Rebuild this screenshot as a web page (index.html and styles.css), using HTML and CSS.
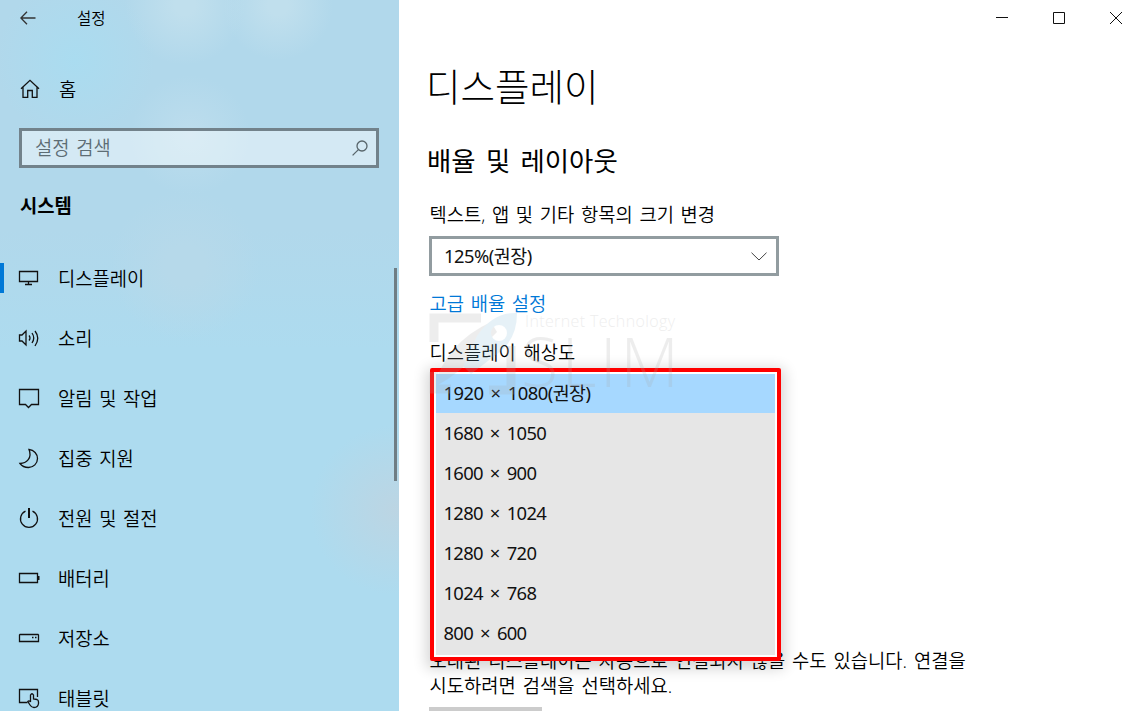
FILE: index.html
```html
<!DOCTYPE html>
<html lang="ko">
	<head>
		<meta charset="utf-8">
		<title>설정</title>
		<link rel="stylesheet" href="styles.css">
	</head>
	<body>
		<aside class="sidebar">
			<header class="titlebar">
				<svg class="back" width="16" height="14" viewBox="0 0 16 14"><path d="M15.500 7H1M7 .7L.9 7L7 13.300"/></svg>
				<span>설정</span>
			</header>

			<a class="home">
				<svg width="20" height="20" viewBox="0 0 20 20"><path d="M1 9.700L10 1.300L19 9.700M3 8.200V18.300H7.700V11.500H12.300V18.300H17V8.200"/></svg>
				<span>홈</span>
			</a>

			<div class="search">
				<span>설정 검색</span>
				<svg width="16" height="16" viewBox="0 0 16 16"><circle cx="10" cy="6" r="5"/><path d="M6.400 9.600L.6 15.400"/></svg>
			</div>

			<h3>시스템</h3>

			<nav>
				<a class="active">
					<svg width="22" height="22" viewBox="0 0 22 22"><path d="M1.500 4.500H19.500V14.500H1.500ZM10.500 14.500V17.500M7 17.500H14"/></svg>
					<span>디스플레이</span>
				</a>
				<a>
					<svg width="22" height="22" viewBox="0 0 22 22"><path d="M1.500 8V14H4L8 18V4L4 8ZM11 8.500Q13 11 11 13.500M14 6Q17.500 11 14 16M17 4Q22.500 11 17 19"/></svg>
					<span>소리</span>
				</a>
				<a>
					<svg width="22" height="22" viewBox="0 0 22 22"><path d="M1.500 2.500H20.500V17.500H13.500L10.500 20.500L7.500 17.500H1.500Z"/></svg>
					<span>알림 및 작업</span>
				</a>
				<a>
					<svg width="22" height="22" viewBox="0 0 22 22"><path d="M11 2.500C16 3 19.500 7 19.500 11.500C19.500 16.500 15.500 20.500 10.500 20.500C7 20.500 3.800 19 2 16.500C8.500 16.500 14.500 11 11 2.500Z"/></svg>
					<span>집중 지원</span>
				</a>
				<a>
					<svg width="22" height="22" viewBox="0 0 22 22"><path d="M7.500 4.200A8.500 8.500 0 1 0 14.500 4.200"/><path class="thick" d="M11 1V11"/></svg>
					<span>전원 및 절전</span>
				</a>
				<a>
					<svg width="22" height="22" viewBox="0 0 22 22"><path d="M1.500 6.500H19.500V15.500H1.500Z"/><path class="thick" d="M20.500 9V13"/></svg>
					<span>배터리</span>
				</a>
				<a>
					<svg width="22" height="22" viewBox="0 0 22 22"><path d="M2 7.500H20L20.500 8V14.500H1.500V8ZM14 10.500H15.500M17 10.500H18.500"/></svg>
					<span>저장소</span>
				</a>
				<a>
					<svg width="22" height="22" viewBox="0 0 22 22"><path d="M9.500 15.500H1.500V2.500H19.500V10"/><path d="M12.500 15V8Q14 5.500 15.500 8V12L19 12.500Q20.500 13 20.500 15V16.500Q20 20.500 16 20.500Q13.500 20.500 12 18L9.800 14.500Q11 13 12.500 15"/></svg>
					<span>태블릿</span>
				</a>
			</nav>
			<div class="scrollbar"></div>
		</aside>

		<main>
			<header class="window-buttons">
				<svg width="12" height="12" viewBox="0 0 12 12"><path d="M0 5.500H12"/></svg>
				<svg width="12" height="12" viewBox="0 0 12 12"><path d="M.5 .5H11.500V11.500H.5Z"/></svg>
				<svg width="12" height="12" viewBox="0 0 12 12"><path d="M0 0L12 12M12 0L0 12"/></svg>
			</header>

			<h1>디스플레이</h1>
			<h2>배율 및 레이아웃</h2>

			<label class="scale-label">텍스트, 앱 및 기타 항목의 크기 변경</label>
			<div class="select">
				<span>125%(권장)</span>
				<svg width="16" height="9" viewBox="0 0 16 9"><path d="M.5 .7L8 8L15.500 .7"/></svg>
			</div>
			<a class="link">고급 배율 설정</a>

			<label class="resolution-label">디스플레이 해상도</label>
			<div class="resolution">
				<ul>
					<li class="selected">1920 × 1080(권장)</li>
					<li>1680 × 1050</li>
					<li>1600 × 900</li>
					<li>1280 × 1024</li>
					<li>1280 × 720</li>
					<li>1024 × 768</li>
					<li>800 × 600</li>
				</ul>
			</div>

			<p>오래된 디스플레이는 자동으로 연결되지 않을 수도 있습니다. 연결을<br>시도하려면 검색을 선택하세요.</p>
			<button></button>

			<svg class="watermark" width="260" height="90" viewBox="0 0 260 90">
				<path class="frame" d="M52 6H5V30M5 60V77H22M60 78H82V34"/>
				<path class="wing" d="M4 76Q18 30 62 10L68 20L54 34Q34 60 4 76Z"/>
				<path class="head" fill-rule="evenodd" d="M48 24Q64 0 88 1Q88 28 68 42L42 62L34 54ZM70 13A8 8 0 1 0 70 29A8 8 0 1 0 70 13Z"/>
				<text class="small" x="96" y="15" textLength="150">Internet Technology</text>
				<text class="big" x="92" y="75" textLength="158">SLIM</text>
			</svg>
		</main>
	</body>
</html>
```
FILE: styles.css
```css
* {
	box-sizing: border-box;
}

body {
	margin: 0;
	display: flex;
	height: 711px;
	overflow: hidden;
	background: #fff;
	color: #000;
	font-family: "Open Sans", "Noto Sans CJK KR", sans-serif;
	font-size: 18.75px;
	font-weight: 350;
	word-spacing: 1.8px;
}

svg {
	fill: none;
	stroke: #111;
	stroke-width: 1.3;
	flex: none;
}

.sidebar {
	position: relative;
	width: 399px;
	height: 711px;
	flex: none;
	overflow: hidden;
	background:
		radial-gradient(circle at 185px 5px, #c0dfed 10px, transparent 60px),
		radial-gradient(circle at 278px 5px, #c0dfed 10px, transparent 55px),
		radial-gradient(circle at 190px 135px, #bddded, transparent 60px),
		radial-gradient(circle at 395px 510px, #bcd5e3, transparent 85px),
		radial-gradient(circle at 185px 265px, #b6d9ea 20px, transparent 75px),
		radial-gradient(circle at 75px 60px, #aadcf0, transparent 80px),
		linear-gradient(#b1d8eb 0, #b1d8eb 230px, #addbef 350px);
}

.titlebar {
	display: flex;
	align-items: center;
	height: 36px;
	padding-left: 20px;
	gap: 41px;
	font-size: 15.5px;
}

/* Hangul sits low in the line box, lift it to the icon's centre */
.sidebar span,
.select span {
	padding-bottom: 2px;
}

.back {
	stroke: #333;
}

.home {
	display: flex;
	align-items: center;
	height: 40px;
	margin-top: 33px;
	padding-left: 20px;
	gap: 19px;
}

.search {
	display: flex;
	align-items: center;
	justify-content: space-between;
	width: 360px;
	height: 40px;
	margin: 19px 0 0 19px;
	padding: 0 8px 0 13px;
	border: 3px solid #72828b;
	background: rgba(255, 255, 255, 0.45);
	color: #5d6d74;
}

.search span {
	padding-bottom: 3px;
}

.search svg {
	stroke: #58656b;
}

h3 {
	margin: 24px 0 0 20px;
	font-size: 18.75px;
	line-height: 28px;
	font-weight: 700;
}

nav {
	margin-top: 28px;
}

nav a {
	display: flex;
	align-items: center;
	height: 60px;
	padding-left: 18px;
	gap: 18px;
}

nav .active {
	background: linear-gradient(#0078d7, #0078d7) 0 15px / 4px 30px no-repeat;
}

.thick {
	stroke-width: 2;
}

.scrollbar {
	position: absolute;
	top: 268px;
	right: 2px;
	width: 3px;
	height: 213px;
	background: #6f7d84;
}

main {
	position: relative;
	flex: 1;
	height: 711px;
	overflow: hidden;
	padding-left: 30px;
}

.window-buttons {
	display: flex;
	align-items: center;
	justify-content: flex-end;
	gap: 45px;
	height: 36px;
	padding-right: 16px;
}

.window-buttons svg {
	stroke-width: 1;
}

h1 {
	margin: 21px 0 0 -3px;
	font-size: 37.5px;
	line-height: 60px;
	font-weight: 300;
}

h2 {
	margin: 24px 0 0 -2px;
	font-size: 26.4px;
	line-height: 40px;
	font-weight: 400;
	word-spacing: 3.5px;
}

label,
.link {
	display: block;
	padding-left: 0.5px;
	line-height: 28px;
}

.scale-label {
	margin-top: 20px;
}

.select {
	display: flex;
	align-items: center;
	justify-content: space-between;
	width: 350px;
	height: 40px;
	margin: 7px 0 0;
	padding: 0 9px 0 12px;
	border: 3px solid #929ca0;
}

.select svg {
	stroke: #444;
	stroke-width: 1;
}

.select span,
li {
	color: #111;
	font-family: "Noto Sans", "Noto Sans CJK KR", sans-serif;
	font-size: 18.4px;
	font-weight: 400;
	letter-spacing: -0.7px;
}

.select span {
	letter-spacing: -0.5px;
}

.link {
	margin-top: 14px;
	color: #0078d7;
}

.resolution-label {
	margin-top: 21px;
	word-spacing: 3px;
}

/* the open list lies over the paragraph below it */
.resolution {
	position: relative;
	z-index: 1;
	width: 351px;
	height: 293px;
	margin: 1px 0 -12px 1px;
	padding: 2px;
	border: 4px solid #f00;
	border-radius: 2px;
	background: #fff;
	box-shadow: 0 4px 14px 4px rgba(0, 0, 0, 0.16);
}

ul {
	height: 281px;
	margin: 0;
	padding: 0;
	list-style: none;
	background: #e6e6e6;
}

li {
	height: 40px;
	padding-left: 7.5px;
	line-height: 40px;
	word-spacing: 3px;
}

.selected {
	height: 39px;
	line-height: 38px;
	letter-spacing: -0.55px;
	background: #a6d8ff;
}

p {
	margin: 0;
	padding-left: 0.5px;
	line-height: 24.5px;
	word-spacing: 2.1px;
}

button {
	display: block;
	width: 113px;
	height: 40px;
	margin: 9px 0 0;
	border: 0;
	background: #ccc;
}

.watermark {
	position: absolute;
	top: 312px;
	left: 30px;
	z-index: 2;
	stroke: none;
	opacity: 0.2;
	pointer-events: none;
}

.frame {
	stroke: #aaa;
	stroke-width: 9;
}

.wing {
	fill: #aaa;
}

.head {
	fill: #87bdd8;
}

.watermark text {
	fill: #aaa;
	word-spacing: 0;
}

.small {
	font-size: 16px;
}

.big {
	font-size: 68px;
}
```
